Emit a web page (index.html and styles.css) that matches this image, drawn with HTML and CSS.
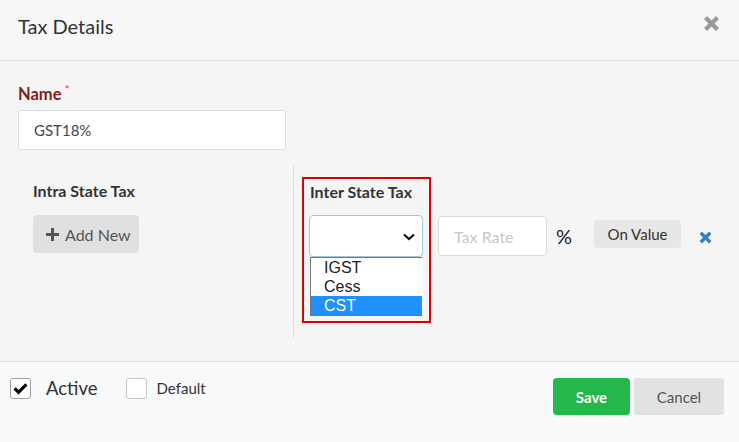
FILE: index.html
```html
<!DOCTYPE html>
<html>
<head>
<meta charset="utf-8">
<link rel="stylesheet" href="styles.css">
</head>
<body>
<div class="modal">
  <div class="header">
    <div class="title">Tax Details</div>
    <svg class="close" width="21" height="21" viewBox="0 0 21 21"><path d="M3 6 L6 3 L10.5 7.5 L15 3 L18 6 L13.5 10.5 L18 15 L15 18 L10.5 13.5 L6 18 L3 15 L7.5 10.5 Z" fill="#9a9a9a"/></svg>
  </div>
  <div class="body">
    <div class="label">Name<span class="req">*</span></div>
    <div class="input name-input">GST18%</div>
    <div class="row">
      <div class="left">
        <div class="sec-title">Intra State Tax</div>
        <div class="add-btn"><svg width="13" height="13" viewBox="0 0 13 13"><path d="M5 0H8V5H13V8H8V13H5V8H0V5H5Z" fill="#555"/></svg><span>Add New</span></div>
      </div>
      <div class="right">
        <div class="redbox">
          <div class="sec-title inner">Inter State Tax</div>
          <div class="select"><svg width="12" height="8" viewBox="0 0 12 8"><path d="M1 1.5 L6 6 L11 1.5" stroke="#111" stroke-width="2.2" fill="none"/></svg></div>
          <div class="list">
            <div class="opt">IGST</div>
            <div class="opt">Cess</div>
            <div class="opt sel">CST</div>
          </div>
        </div>
        <div class="controls">
          <div class="input rate">Tax Rate</div>
          <div class="pct">%</div>
          <div class="onvalue">On Value</div>
          <svg class="del" width="13" height="13" viewBox="0 0 13 13"><path d="M0.5 3 L3 0.5 L6.5 4 L10 0.5 L12.5 3 L9 6.5 L12.5 10 L10 12.5 L6.5 9 L3 12.5 L0.5 10 L4 6.5 Z" fill="#3f7fc1"/></svg>
        </div>
      </div>
    </div>
  </div>
  <div class="footer">
    <div class="cb"><svg width="15" height="12" viewBox="0 0 15 12"><path d="M0.5 6.5 L2.7 4.3 L5.5 7.1 L12.3 0.3 L14.5 2.5 L5.5 11.5 Z" fill="#000"/></svg></div>
    <div class="cb-label big">Active</div>
    <div class="cb second"></div>
    <div class="cb-label small">Default</div>
    <div class="spacer"></div>
    <div class="btn save">Save</div>
    <div class="btn cancel">Cancel</div>
  </div>
</div>
</body>
</html>
```
FILE: styles.css
```css
* { box-sizing: border-box; }
body { margin: 0; font-family: Lato, "Open Sans", sans-serif; color: #333; }
.modal { width: 739px; height: 442px; background: #f5f5f5; display: flex; flex-direction: column; }
.header { height: 61px; background: #f7f7f7; border-bottom: 1px solid #e0e0e0; display: flex; justify-content: space-between; align-items: flex-start; padding: 14px 17px 0 18px; }
.title { font-size: 20px; line-height: 24px; color: #333; }
.close { margin-top: -1px; }
.body { flex: 1; padding: 23px 18px 0 18px; }
.label { font-size: 16.5px; line-height: 20px; font-weight: 700; color: #861b1b; }
.req { color: #e04a4a; font-size: 12px; vertical-align: top; position: relative; top: -4px; margin-left: 3px; font-weight: 400; }
.input { background: #fff; border: 1px solid #dcdcdc; border-radius: 3px; height: 40px; display: flex; align-items: center; font-size: 16px; }
.name-input { margin-top: 6px; width: 268px; padding-left: 15px; color: #444; font-size: 15px; }
.row { display: flex; margin-top: 15px; height: 173px; }
.left { width: 275px; padding: 17px 0 0 15px; }
.sec-title { font-size: 16px; line-height: 18px; font-weight: 700; color: #333; }
.add-btn { margin-top: 15px; width: 106px; height: 38px; border-radius: 4px; background: #e0e0e1; display: flex; align-items: center; padding-left: 13px; font-size: 16px; color: #555; }
.add-btn span { margin-left: 6px; }
.right { flex: 1; border-left: 1px solid #dddddd; padding: 12px 0 0 8px; display: flex; align-items: flex-start; }
.redbox { width: 129px; height: 146px; border: 2px solid #e00000; padding: 4px 0 0 5px; }
.sec-title.inner { margin-left: 1px; }
.select { margin-top: 14px; width: 114px; height: 42px; background: #fff; border: 1px solid #a3c3e3; border-radius: 4px; display: flex; align-items: center; justify-content: flex-end; padding-right: 7px; padding-top: 2px; }
.list { width: 113px; margin-left: 1px; border: 1px solid #767676; border-right-color: #fff; background: #fff; font-family: "Liberation Sans", Arial, sans-serif; }
.opt { height: 19px; line-height: 19px; font-size: 16px; padding-left: 13px; color: #222; }
.opt.sel { background: #1e90ff; color: #fff; }
.controls { margin-left: 7px; margin-top: 39px; display: flex; align-items: center; }
.rate { width: 109px; border-radius: 4px; padding-left: 15px; color: #c8c8c8; }
.pct { margin-left: 9px; font-size: 20px; color: #222; }
.onvalue { margin-left: 22px; margin-top: -4px; width: 87px; height: 28px; background: #e7e7e7; border-radius: 4px; display: flex; align-items: center; justify-content: center; font-size: 15px; color: #333; }
.del { margin-left: 18px; margin-top: 2px; }
.footer { height: 81px; border-top: 1px solid #dddddd; background: #f8f9fa; display: flex; align-items: flex-start; padding: 16px 15px 0 10px; }
.cb { width: 21px; height: 21px; border: 1px solid #a0a0a0; border-radius: 3px; background: #fff; display: flex; align-items: center; justify-content: center; }
.cb.second { margin-left: 28px; border-color: #c8c8c8; }
.cb-label { line-height: 21px; color: #333; }
.cb-label.big { margin-left: 15px; font-size: 18.5px; }
.cb-label.small { margin-left: 10px; font-size: 15px; }
.spacer { flex: 1; }
.btn { height: 37px; border-radius: 4px; display: flex; align-items: center; justify-content: center; font-size: 15px; }
.save { width: 77px; background: #22b94a; color: #fff; font-weight: 700; }
.cancel { width: 90px; margin-left: 4px; background: #e2e2e2; color: #555; border-radius: 3px; }
```
